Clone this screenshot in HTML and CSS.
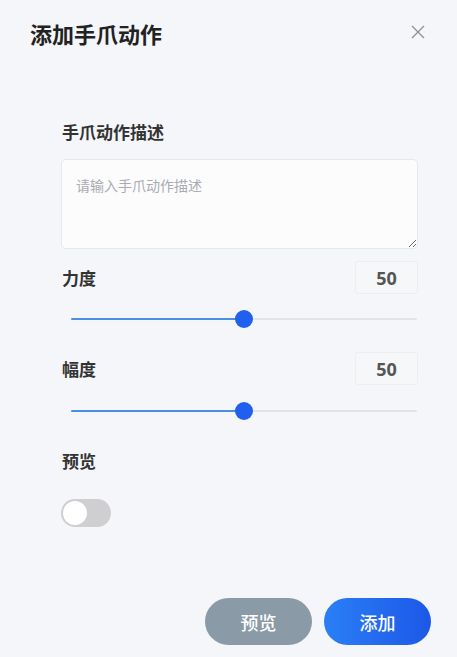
FILE: index.html
```html
<!DOCTYPE html>
<html lang="zh-CN">
<head>
<meta charset="utf-8">
<link rel="stylesheet" href="styles.css">
</head>
<body>
<div class="dialog">
  <header class="header">
    <h1 class="title">添加手爪动作</h1>
    <button class="close" aria-label="关闭">
      <svg width="14" height="14" viewBox="0 0 14 14"><path d="M1 1L13 13M13 1L1 13" stroke="#8a9099" stroke-width="1.3" fill="none"/></svg>
    </button>
  </header>
  <main class="form">
    <div class="field">
      <label class="label">手爪动作描述</label>
      <textarea class="textarea" placeholder="请输入手爪动作描述"></textarea>
    </div>
    <div class="field slider-field">
      <div class="row">
        <span class="label">力度</span>
        <span class="value">50</span>
      </div>
      <div class="slider">
        <div class="track"><div class="fill" style="width:50%"></div></div>
        <div class="thumb" style="left:50%"></div>
      </div>
    </div>
    <div class="field slider-field">
      <div class="row">
        <span class="label">幅度</span>
        <span class="value">50</span>
      </div>
      <div class="slider">
        <div class="track"><div class="fill" style="width:50%"></div></div>
        <div class="thumb" style="left:50%"></div>
      </div>
    </div>
    <div class="field preview-field">
      <span class="label">预览</span>
      <div class="toggle"><div class="knob"></div></div>
    </div>
  </main>
  <footer class="footer">
    <button class="btn btn-gray">预览</button>
    <button class="btn btn-blue">添加</button>
  </footer>
</div>
</body>
</html>
```
FILE: styles.css
```css
* { box-sizing: border-box; }
html, body { margin: 0; padding: 0; }
body {
  background: #f5f6f9;
  font-family: "Noto Sans CJK SC", "Noto Sans", sans-serif;
  color: #333;
  width: 457px;
  height: 657px;
  overflow: hidden;
}
.dialog {
  height: 657px;
  display: flex;
  flex-direction: column;
}
.header {
  display: flex;
  justify-content: space-between;
  align-items: flex-start;
  padding: 17px 32px 0 30px;
}
.title {
  margin: 0;
  font-size: 22px;
  font-weight: 700;
  color: #222;
  line-height: 32px;
}
.close {
  border: none;
  background: none;
  padding: 0;
  margin-top: 8px;
  width: 14px;
  height: 14px;
  display: flex;
}
.form {
  padding: 70px 39px 0 61px;
  display: flex;
  flex-direction: column;
}
.label {
  display: block;
  font-size: 17px;
  font-weight: 700;
  color: #333;
  line-height: 26px;
}
.field > .label { margin-left: 1px; }
.textarea {
  display: block;
  margin-top: 14px;
  width: 357px;
  height: 90px;
  border: 1px solid #e6e8ec;
  border-radius: 5px;
  background: #fcfcfd;
  padding: 15px 14px;
  font-family: inherit;
  font-size: 14px;
  line-height: 20px;
  color: #333;
  resize: vertical;
  outline: none;
}
.textarea::placeholder { color: #a9abb0; }
.slider-field { margin-top: 12px; }
.slider-field + .slider-field { margin-top: 24px; }
.row {
  display: flex;
  justify-content: space-between;
  align-items: center;
  padding-left: 1px;
}
.value {
  width: 63px;
  height: 33px;
  border: 1px solid #eceef2;
  border-radius: 3px;
  background: #f6f7f9;
  display: flex;
  align-items: center;
  justify-content: center;
  font-family: "Noto Sans", sans-serif;
  font-size: 18px;
  font-weight: 700;
  color: #555;
}
.slider {
  position: relative;
  margin: 16px 1px 0 10px;
  height: 18px;
  display: flex;
  align-items: center;
}
.slider-field + .slider-field .slider { margin-top: 17px; }
.track {
  width: 100%;
  height: 2px;
  background: #e3e4e9;
  border-radius: 1px;
}
.fill {
  height: 2px;
  background: #4a90e2;
  border-radius: 1px;
}
.thumb {
  position: absolute;
  top: 0;
  width: 18px;
  height: 18px;
  margin-left: -9px;
  border-radius: 50%;
  background: #2160ee;
}
.preview-field { margin-top: 28px; }
.toggle {
  margin-top: 25px;
  width: 50px;
  height: 28px;
  border-radius: 14px;
  background: #cfcfd1;
  padding: 2px;
}
.knob {
  width: 24px;
  height: 24px;
  border-radius: 50%;
  background: #fff;
}
.footer {
  margin-top: auto;
  display: flex;
  justify-content: flex-end;
  gap: 12px;
  padding: 0 26px 12px 0;
}
.btn {
  width: 107px;
  height: 47px;
  border: none;
  border-radius: 24px;
  font-family: inherit;
  font-size: 18px;
  color: #fff;
  font-weight: 500;
}
.btn-gray { background: #8a9aa7; }
.btn-blue { background: linear-gradient(90deg, #2a7ff7 0%, #1d58e7 100%); }
```
